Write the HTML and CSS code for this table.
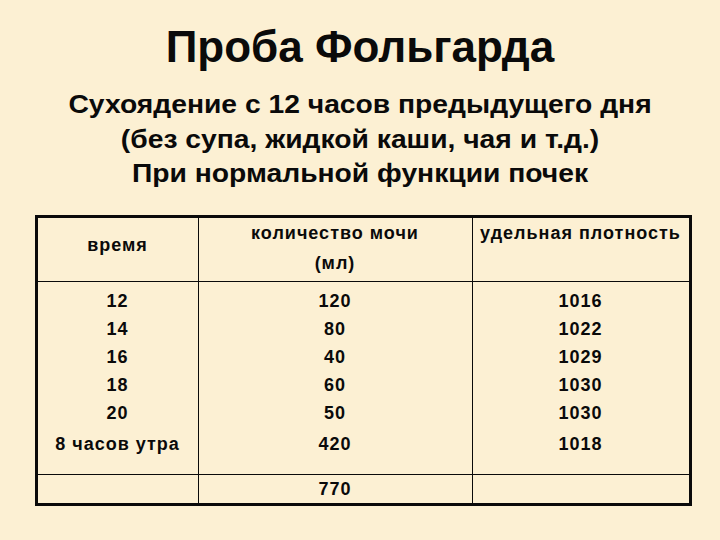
FILE: index.html
```html
<!DOCTYPE html>
<html lang="ru">
<head>
<meta charset="utf-8">
<title>Проба Фольгарда</title>
<link rel="stylesheet" href="styles.css">
</head>
<body>
<div class="slide">
  <h1 class="title">Проба Фольгарда</h1>
  <div class="subtitle">
    <div class="line">Сухоядение с 12 часов предыдущего дня</div>
    <div class="line">(без супа, жидкой каши, чая и т.д.)</div>
    <div class="line">При нормальной функции почек</div>
  </div>
  <table class="data">
    <colgroup>
      <col class="c1"><col class="c2"><col class="c3">
    </colgroup>
    <thead>
      <tr class="head">
        <th class="h-time">время</th>
        <th class="h-amount">количество мочи<br>(мл)</th>
        <th class="h-density">удельная плотность</th>
      </tr>
    </thead>
    <tbody>
      <tr class="body">
        <td>
          <div class="v">12</div><div class="v">14</div><div class="v">16</div>
          <div class="v">18</div><div class="v">20</div><div class="v last">8 часов утра</div>
        </td>
        <td>
          <div class="v">120</div><div class="v">80</div><div class="v">40</div>
          <div class="v">60</div><div class="v">50</div><div class="v last">420</div>
        </td>
        <td>
          <div class="v">1016</div><div class="v">1022</div><div class="v">1029</div>
          <div class="v">1030</div><div class="v">1030</div><div class="v last">1018</div>
        </td>
      </tr>
      <tr class="total">
        <td></td>
        <td>770</td>
        <td></td>
      </tr>
    </tbody>
  </table>
</div>
</body>
</html>
```

FILE: styles.css
```css
html, body {
  margin: 0;
  padding: 0;
}
body {
  width: 720px;
  height: 540px;
  overflow: hidden;
  background: #fcf0d3;
  color: #0a0a0a;
  font-family: "Liberation Sans", Arial, sans-serif;
  font-weight: bold;
}
.slide {
  display: flex;
  flex-direction: column;
  align-items: center;
  padding-top: 21px;
}
.title {
  margin: 0;
  font-size: 44px;
  line-height: 51px;
  font-weight: bold;
  text-align: center;
}
.subtitle {
  margin-top: 15px;
  font-size: 25px;
  line-height: 34.5px;
  text-align: center;
  transform: scaleX(1.13);
}
.data {
  margin-top: 24px;
  margin-left: 6px;
  border-collapse: collapse;
  border: 3px solid #0a0a0a;
  font-size: 18px;
  letter-spacing: 1px;
  text-align: center;
}
.data col.c1 { width: 162px; }
.data col.c2 { width: 274px; }
.data col.c3 { width: 218px; }
.data th, .data td {
  border: 1px solid #0a0a0a;
  padding: 0;
  font-weight: bold;
  vertical-align: top;
}
.data .head {
  height: 65px;
}
.data .head th {
  line-height: 30px;
}
.data .h-time { padding-top: 12px; }
.data .body td {
  line-height: 28.2px;
  padding-top: 5px;
  padding-bottom: 16px;
}
.v.last { margin-top: 2.4px; }
.data .total {
  height: 30px;
}
.data .total td {
  line-height: 26px;
  vertical-align: middle;
}
```
